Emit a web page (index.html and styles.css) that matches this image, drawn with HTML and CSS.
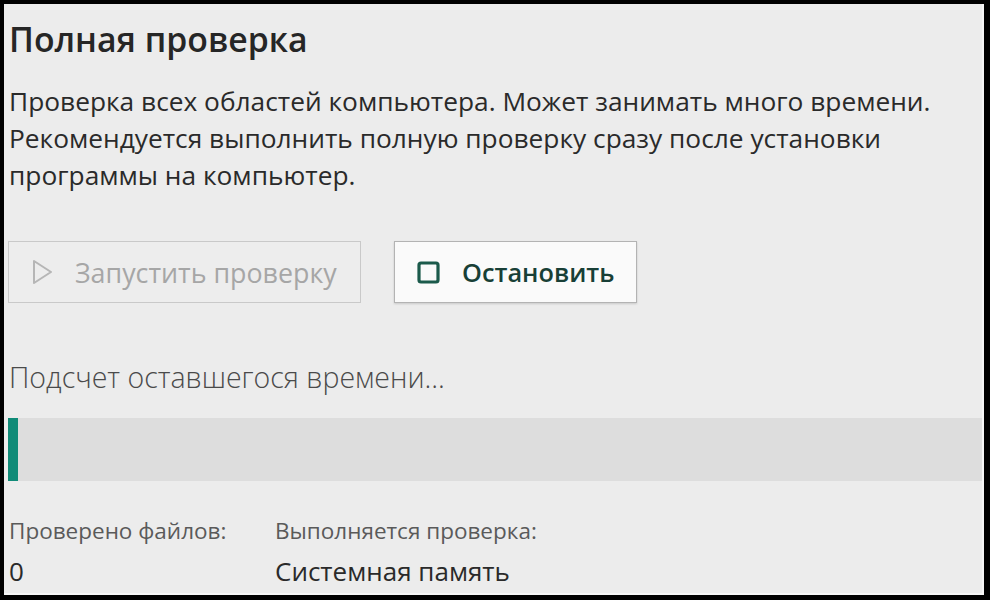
FILE: index.html
```html
<!DOCTYPE html>
<html lang="ru">
  <head>
    <meta charset="UTF-8" />
    <meta name="viewport" content="width=device-width, initial-scale=1.0" />
    <title>Полная проверка</title>
    <link rel="stylesheet" href="styles.css">
  </head>
  <body>
    <div class="frame">
      <h1 class="title">Полная проверка</h1>
      <p class="desc">
        Проверка всех областей компьютера. Может занимать много времени.
        Рекомендуется выполнить полную проверку сразу после установки
        программы на компьютер.
      </p>

      <div class="actions">
        <button class="btn btn-start" disabled>
          <svg class="btn-icon" width="22" height="28" viewBox="0 0 22 28">
            <path d="M3 3 L20 14 L3 25 Z" fill="none" stroke="#b6b6b6" stroke-width="2" stroke-linejoin="round" />
          </svg>
          Запустить проверку
        </button>
        <button class="btn btn-stop">
          <svg class="btn-icon" width="23" height="23" viewBox="0 0 23 23">
            <rect x="2" y="2" width="19" height="19" rx="2" fill="none" stroke="#1b5a4b" stroke-width="3.2" />
          </svg>
          Остановить
        </button>
      </div>

      <div class="remaining">Подсчет оставшегося времени...</div>

      <div class="progress">
        <div class="progress-fill" style="width: 10px"></div>
      </div>

      <div class="stats">
        <div class="stat stat-files">
          <div class="stat-label">Проверено файлов:</div>
          <div class="stat-value">0</div>
        </div>
        <div class="stat">
          <div class="stat-label">Выполняется проверка:</div>
          <div class="stat-value">Системная память</div>
        </div>
      </div>
    </div>
  </body>
</html>
```

FILE: styles.css
```css
html,
body {
  margin: 0;
  height: 100%;
  background-color: #000;
}
body {
  font-family: "Open Sans", "Noto Sans", sans-serif;
  padding: 4px 6px 5px 4px;
  box-sizing: border-box;
  overflow: hidden;
}
.frame {
  height: 100%;
  box-sizing: border-box;
  background-color: #ececec;
  border-right: 2px solid #f6f6f6;
  border-bottom: 2px solid #f6f6f6;
  padding: 15px 0 0 4px;
  color: #2b2b2b;
}
.title {
  margin: 0 0 0 1px;
  font-size: 33.8px;
  line-height: 40px;
  font-weight: 600;
  color: #262626;
}
.desc {
  margin: 24px 0 0 1px;
  font-size: 26.3px;
  line-height: 37px;
  color: #2a2a2a;
}
.actions {
  display: flex;
  gap: 33px;
  margin-top: 47px;
}
.btn {
  display: flex;
  align-items: center;
  height: 62px;
  box-sizing: border-box;
  font-family: inherit;
  font-size: 26.8px;
  padding: 0 20px 0 22px;
  border-radius: 0;
  cursor: pointer;
}
.btn-icon {
  margin-right: 22px;
}
.btn-start {
  width: 353px;
  background-color: #ededed;
  border: 1px solid #c9c9c9;
  color: #a6a6a6;
}
.btn-stop {
  width: 243px;
  font-size: 25.3px;
  background-color: #fafafa;
  border: 1px solid #b3b3b3;
  color: #183f36;
  font-weight: 600;
  box-shadow: 0 1px 2px rgba(0, 0, 0, 0.15);
}
.remaining {
  margin: 59px 0 0 1px;
  font-size: 28.5px;
  line-height: 30px;
  font-weight: 300;
  color: #4a4a4a;
}
.progress {
  margin-top: 26px;
  height: 63px;
  background-color: #dddddd;
}
.progress-fill {
  height: 100%;
  background-color: #108b78;
}
.stats {
  display: flex;
  margin-top: 35px;
  margin-left: 1px;
}
.stat-files {
  width: 266px;
}
.stat-label {
  font-size: 22.5px;
  line-height: 30px;
  color: #5a5a5a;
}
.stat-value {
  margin-top: 10px;
  font-size: 26px;
  line-height: 30px;
  color: #2a2a2a;
}
```
